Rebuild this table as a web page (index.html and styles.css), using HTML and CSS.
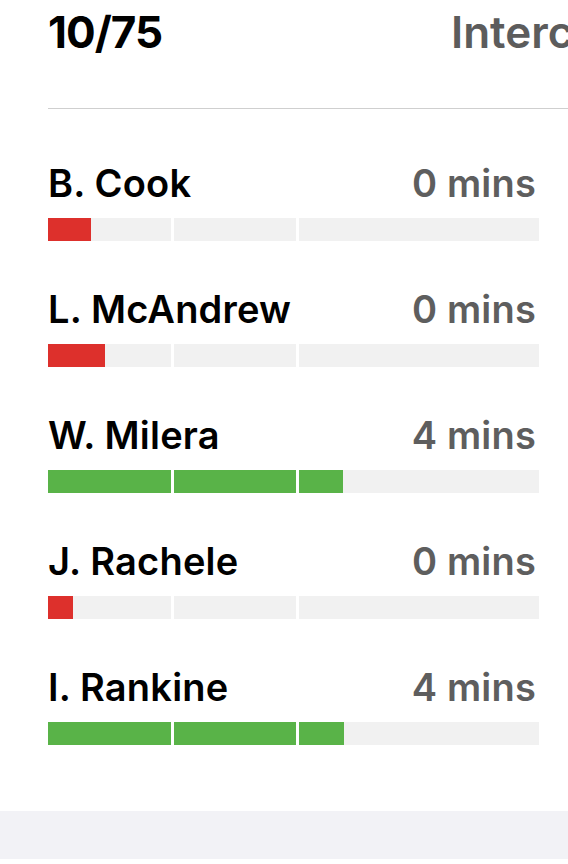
FILE: index.html
```html
<!DOCTYPE html>
<html>
<head>
<meta charset="utf-8">
<title>Minutes</title>
<link rel="stylesheet" href="styles.css">
</head>
<body>
<div class="page">
	<div class="head">
		<span class="score">10/75</span>
		<span class="tab">Interceptions</span>
	</div>

	<ul class="players">
		<li class="player">
			<div class="line"><span class="name">B. Cook</span><span class="mins">0 mins</span></div>
			<div class="bar">
				<div class="seg"><div class="fill red" style="width:35%"></div></div>
				<div class="seg"></div>
				<div class="seg"></div>
			</div>
		</li>
		<li class="player">
			<div class="line"><span class="name">L. McAndrew</span><span class="mins">0 mins</span></div>
			<div class="bar">
				<div class="seg"><div class="fill red" style="width:46.5%"></div></div>
				<div class="seg"></div>
				<div class="seg"></div>
			</div>
		</li>
		<li class="player">
			<div class="line"><span class="name">W. Milera</span><span class="mins">4 mins</span></div>
			<div class="bar">
				<div class="seg"><div class="fill green" style="width:100%"></div></div>
				<div class="seg"><div class="fill green" style="width:100%"></div></div>
				<div class="seg"><div class="fill green" style="width:18.3%"></div></div>
			</div>
		</li>
		<li class="player">
			<div class="line"><span class="name">J. Rachele</span><span class="mins">0 mins</span></div>
			<div class="bar">
				<div class="seg"><div class="fill red" style="width:20.5%"></div></div>
				<div class="seg"></div>
				<div class="seg"></div>
			</div>
		</li>
		<li class="player">
			<div class="line"><span class="name">I. Rankine</span><span class="mins">4 mins</span></div>
			<div class="bar">
				<div class="seg"><div class="fill green" style="width:100%"></div></div>
				<div class="seg"><div class="fill green" style="width:100%"></div></div>
				<div class="seg"><div class="fill green" style="width:18.8%"></div></div>
			</div>
		</li>
	</ul>
</div>
<div class="foot"></div>
</body>
</html>
```

FILE: styles.css
```css
*{ padding:0; margin:0; box-sizing:border-box;}
ul{ list-style:none;}
html,body{ background:#fff; overflow:hidden;}
body{ font-family:Inter, "Noto Sans", sans-serif; color:#000; width:568px;}

.page{ height:811px; padding-left:48px;}

.head{ display:flex; padding-top:6px; padding-bottom:50px; border-bottom:1px solid #cfcfcf; white-space:nowrap; overflow:hidden;}
.head .score{ font-size:44px; line-height:52px; font-weight:700; letter-spacing:-1px; width:403px; flex:none;}
.head .tab{ font-size:44px; line-height:52px; font-weight:600; color:#5c5c5c;}

.players{ padding-top:54px; padding-right:29px;}
.player{ margin-bottom:48px;}
.player .line{ display:flex; justify-content:space-between; padding-right:3px; height:40px; margin-bottom:15px;}
.player .name{ font-size:38px; line-height:40px; font-weight:600; letter-spacing:0.2px;}
.player .mins{ font-size:38px; line-height:40px; font-weight:600; letter-spacing:0.2px; color:#5e5e5e;}

.bar{ display:grid; grid-template-columns:123px 122px 1fr; gap:3px; height:23px;}
.bar .seg{ background:#f1f1f1;}
.bar .fill{ height:100%;}
.bar .red{ background:#dd302c;}
.bar .green{ background:#59b348;}

.foot{ height:48px; background:#f2f2f6;}
```
